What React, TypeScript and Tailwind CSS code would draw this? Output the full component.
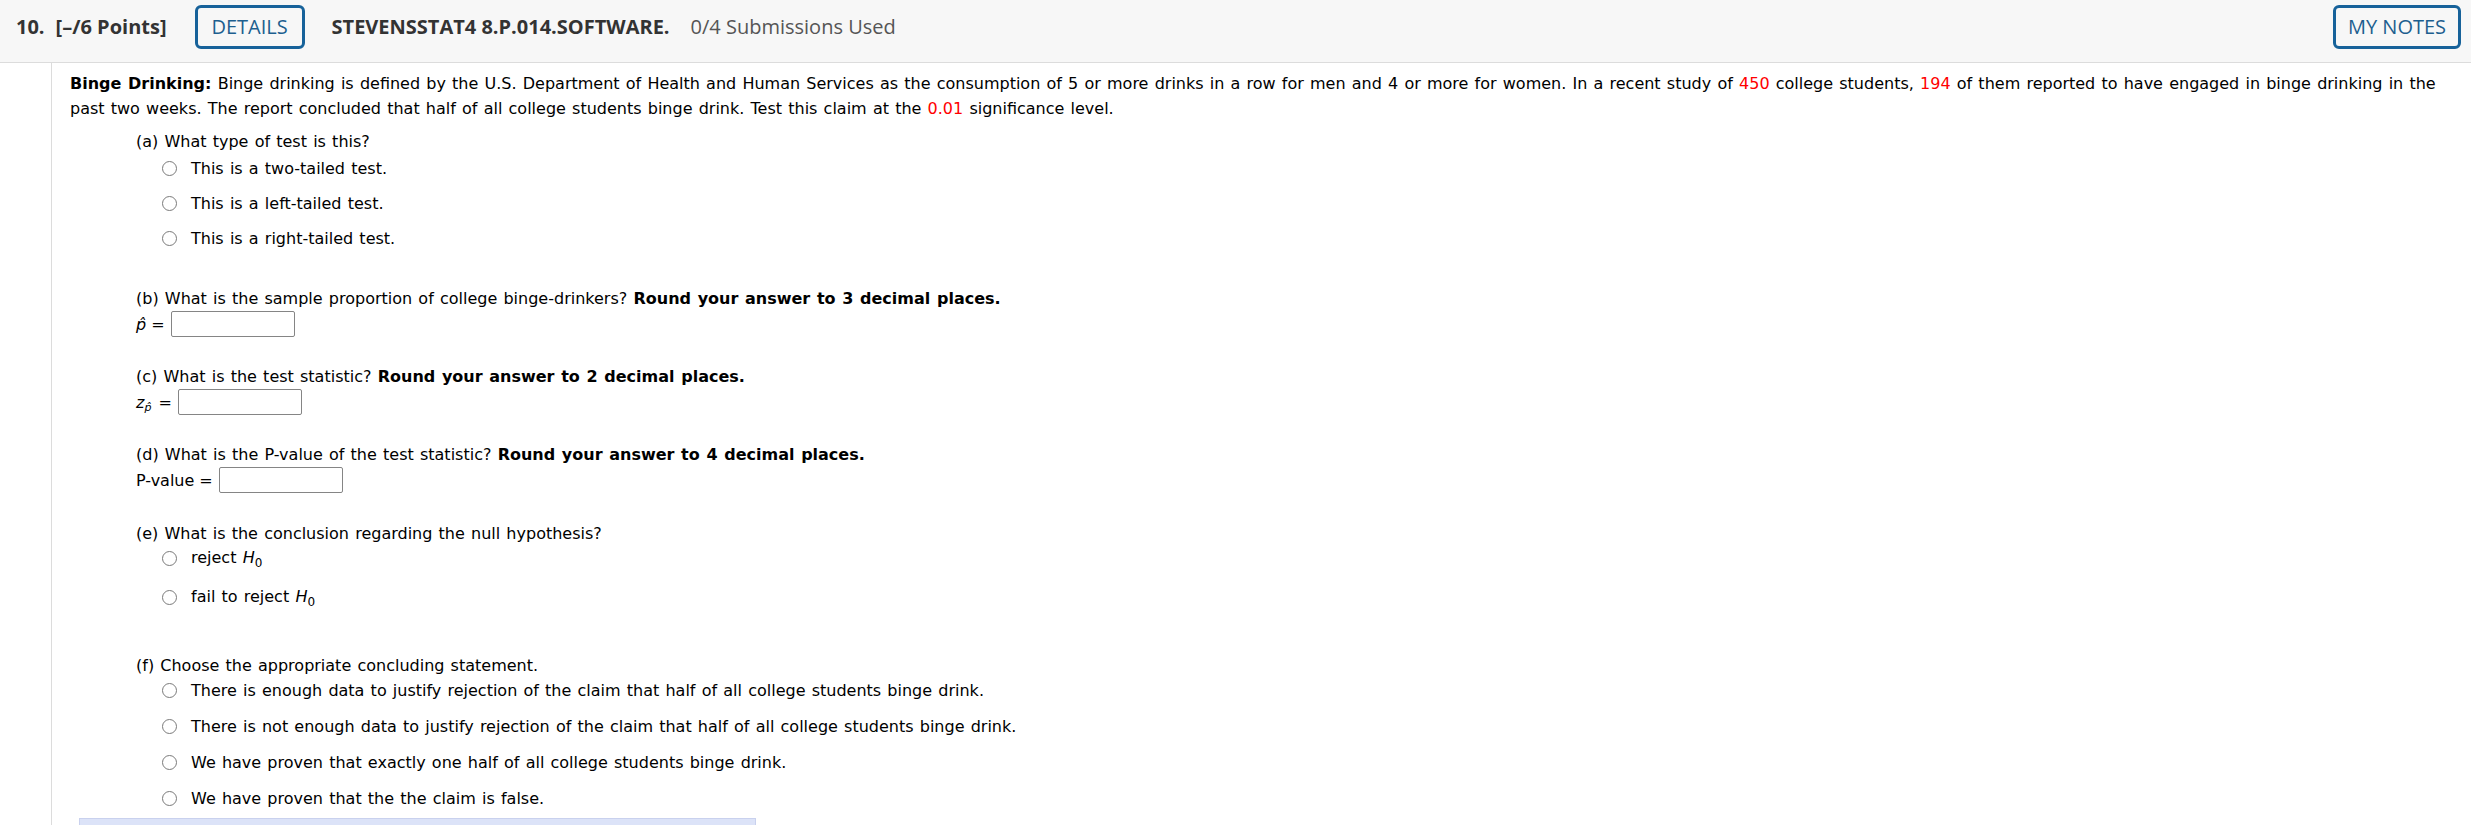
import React from "react";

const Radio = () => (
  <span className="inline-block w-[15px] h-[15px] rounded-full border border-[#7a7a7a] bg-white shrink-0" />
);

const Option = ({ children }: { children: React.ReactNode }) => (
  <div className="flex items-center h-[25px] pl-[26px]">
    <Radio />
    <span className="ml-[14px] whitespace-nowrap">{children}</span>
  </div>
);

const AnswerBox = () => (
  <input
    type="text"
    className="w-[124px] h-[26px] border border-[#858585] rounded-[2px] bg-white outline-none"
  />
);

const Red = ({ children }: { children: React.ReactNode }) => (
  <span className="text-[#ff0000]">{children}</span>
);

const H0 = () => (
  <span>
    <i>H</i>
    <span className="text-[12px] relative top-[4px]">0</span>
  </span>
);

export default function App() {
  return (
    <div className="min-h-screen bg-white">
      {/* Question header */}
      <header className="h-[63px] bg-[#f7f7f7] border-b border-[#dcdcdc] flex items-start pt-[5px] pl-[16px] pr-[10px] font-['Open_Sans',sans-serif] text-[20px]">
        <div className="flex items-center h-[44px] w-full">
          <span className="font-bold text-[#333]">10.</span>
          <span className="ml-[11px] font-bold text-[#333]">[–/6 Points]</span>
          <button className="ml-[28px] w-[110px] h-[44px] border-[3px] border-[#17629a] rounded-[6px] text-[#1d5f8f] bg-transparent">
            DETAILS
          </button>
          <span className="ml-[27px] font-bold text-[#333]">
            STEVENSSTAT4 8.P.014.SOFTWARE.
          </span>
          <span className="ml-[21px] text-[#555]">0/4 Submissions Used</span>
          <button className="ml-auto w-[128px] h-[44px] border-[3px] border-[#17629a] rounded-[6px] text-[#1d5f8f] bg-transparent">
            MY NOTES
          </button>
        </div>
      </header>

      <div className="flex min-h-[762px]">
        <div className="w-[52px] shrink-0 border-r border-[#dcdcdc]" />
        <main className="flex-1 pl-[18px] pr-[4px] pt-[8px] font-['DejaVu_Sans',Verdana,sans-serif] text-[16px] leading-[25px] text-black [word-spacing:1.1px]">
          <p className="whitespace-nowrap">
            <b>Binge Drinking:</b> Binge drinking is defined by the U.S. Department of Health and
            Human Services as the consumption of 5 or more drinks in a row for men and 4 or more
            for women. In a recent study of <Red>450</Red> college students, <Red>194</Red> of them
            reported to have engaged in binge drinking in the
            <br />
            past two weeks. The report concluded that half of all college students binge drink.
            Test this claim at the <Red>0.01</Red> significance level.
          </p>

          <div className="pl-[66px] mt-[8px]">
            {/* (a) */}
            <div>(a) What type of test is this?</div>
            <div className="flex flex-col gap-[10px] mt-[2px]">
              <Option>This is a two-tailed test.</Option>
              <Option>This is a left-tailed test.</Option>
              <Option>This is a right-tailed test.</Option>
            </div>

            {/* (b) */}
            <div className="mt-[35px]">
              (b) What is the sample proportion of college binge-drinkers?{" "}
              <b>Round your answer to 3 decimal places.</b>
            </div>
            <div className="flex items-center h-[26px]">
              <i>p̂</i>
              <span className="ml-[5px] mr-[6px]">=</span>
              <AnswerBox />
            </div>

            {/* (c) */}
            <div className="mt-[27px]">
              (c) What is the test statistic? <b>Round your answer to 2 decimal places.</b>
            </div>
            <div className="flex items-center h-[26px]">
              <i>z</i>
              <i className="text-[11px] relative top-[5px]">p̂</i>
              <span className="ml-[7px] mr-[6px]">=</span>
              <AnswerBox />
            </div>

            {/* (d) */}
            <div className="mt-[27px]">
              (d) What is the P-value of the test statistic?{" "}
              <b>Round your answer to 4 decimal places.</b>
            </div>
            <div className="flex items-center h-[26px]">
              <span>P-value</span>
              <span className="ml-[5px] mr-[6px]">=</span>
              <AnswerBox />
            </div>

            {/* (e) */}
            <div className="mt-[28px]">(e) What is the conclusion regarding the null hypothesis?</div>
            <div className="flex flex-col gap-[14px]">
              <Option>
                reject <H0 />
              </Option>
              <Option>
                fail to reject <H0 />
              </Option>
            </div>

            {/* (f) */}
            <div className="mt-[43px]">(f) Choose the appropriate concluding statement.</div>
            <div className="flex flex-col gap-[11px]">
              <Option>
                There is enough data to justify rejection of the claim that half of all college
                students binge drink.
              </Option>
              <Option>
                There is not enough data to justify rejection of the claim that half of all college
                students binge drink.
              </Option>
              <Option>We have proven that exactly one half of all college students binge drink.</Option>
              <Option>We have proven that the the claim is false.</Option>
            </div>
          </div>

          <div className="mt-[7px] ml-[9px] w-[677px] h-[20px] bg-[#dce3f8] border border-[#c9d1ee]" />
        </main>
      </div>
    </div>
  );
}
